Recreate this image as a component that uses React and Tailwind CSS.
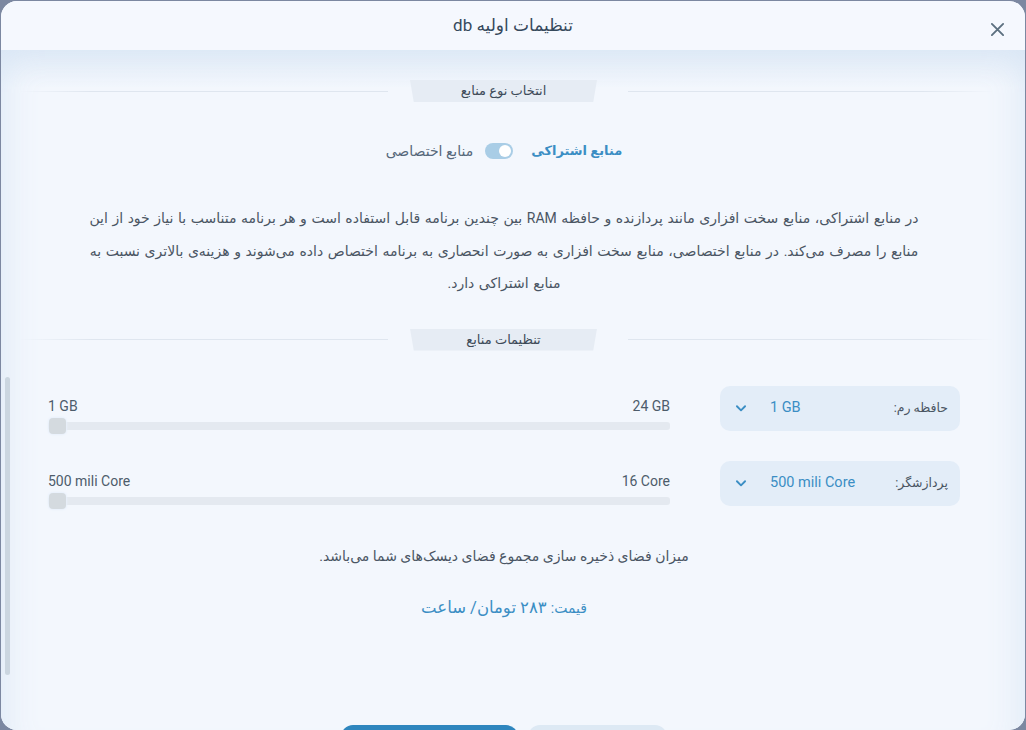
import React from "react";

function SectionTitle({ children }) {
  return (
    <div dir="ltr" className="flex items-center h-[22px]">
      <div className="ml-[17px] w-[370px] h-px bg-gradient-to-r from-transparent via-[#dfe6ef] via-20% to-[#dfe6ef]" />
      <div className="ml-[22px] w-[187px] h-[22px] bg-[#e6ecf4] [clip-path:polygon(0_0,100%_0,98%_100%,2%_100%)] flex items-center justify-center text-[13px] text-[#3d4a58]" dir="rtl">
        {children}
      </div>
      <div className="ml-[31px] w-[367px] h-px bg-gradient-to-l from-transparent via-[#dfe6ef] via-20% to-[#dfe6ef]" />
    </div>
  );
}

function Chevron() {
  return (
    <svg width="14" height="14" viewBox="0 0 24 24" fill="none" stroke="#3b8ec4" strokeWidth="3.2" strokeLinecap="round" strokeLinejoin="round">
      <path d="M5 9l7 7 7-7" />
    </svg>
  );
}

function SelectBox({ label, value }) {
  return (
    <div dir="ltr" className="shrink-0 w-[240px] h-[45px] rounded-[10px] bg-[#e3edf8] flex items-center">
      <div className="ml-[14px] flex items-center"><Chevron /></div>
      <div className="ml-[22px] text-[14.5px] text-[#3b8ec4]">{value}</div>
      <div className="flex-1" />
      <div className="mr-[12px] text-[12.5px] text-[#4a5563]" dir="rtl">{label}</div>
    </div>
  );
}

function Slider({ min, max }) {
  return (
    <div dir="ltr" className="w-[622px] pt-[12px]">
      <div className="flex justify-between text-[14px] text-[#4d5c6b] leading-[16px]">
        <span>{min}</span>
        <span>{max}</span>
      </div>
      <div className="relative mt-[4px] h-[16px] flex items-center">
        <div className="w-full h-[8px] rounded-[3px] bg-[#e4e9f0]" />
        <div className="absolute left-[1px] top-0 w-[17px] h-[16px] rounded-[4px] bg-[#d4dadf] shadow-[0_0_2px_1px_#e8f0fb]" />
      </div>
    </div>
  );
}

export default function App() {
  return (
    <div className="w-[1026px] h-[730px] bg-[#7c88a1] pt-px px-px overflow-hidden" style={{ fontFamily: "Roboto, 'DejaVu Sans', 'Noto Sans', sans-serif" }}>
      <div dir="rtl" className="relative h-[729px] rounded-[16px] bg-[#f3f7fd] overflow-hidden flex flex-col">
        {/* Header */}
        <div className="relative h-[49px] shrink-0 bg-[#f5f8fe] flex items-center justify-center">
          <div className="text-[17px] text-[#35495c] mt-[1px]">تنظیمات اولیه db</div>
          <button className="absolute right-[20px] top-[20px] w-[16px] h-[16px] flex items-center justify-center">
            <svg width="15" height="15" viewBox="0 0 16 16" fill="none" stroke="#5c7080" strokeWidth="2" strokeLinecap="round">
              <path d="M2 2l12 12M14 2L2 14" />
            </svg>
          </button>
        </div>

        {/* Body */}
        <div className="relative flex-1 bg-[linear-gradient(to_bottom,#e4edf8,#f3f7fd_38px)] shadow-[inset_0_0_36px_rgba(214,228,244,0.9)]">
          <div className="absolute left-[4px] top-[327px] w-[5px] h-[298px] rounded-full bg-[#cbd6e0]" />

          <div className="pt-[30px]">
            <SectionTitle>انتخاب نوع منابع</SectionTitle>
          </div>

          <div className="w-[1006px] mr-auto">
            {/* toggle row */}
            <div className="mt-[39px] h-[20px] flex items-center justify-center">
              <span className="font-bold text-[13px] text-[#3b8ec4]">منابع اشتراکی</span>
              <div dir="ltr" className="mr-[18px] ml-[12px] w-[28px] h-[16px] rounded-full bg-[#a9cde6] flex items-center justify-end pr-[2px]">
                <div className="w-[12px] h-[12px] rounded-full bg-white" />
              </div>
              <span className="text-[14px] text-[#56677a]">منابع اختصاصی</span>
            </div>

            {/* paragraph */}
            <div className="mt-[41px] text-center text-[14px] leading-[32.5px] text-[#4a5563] [word-spacing:1.1px]">
              <div className="whitespace-nowrap">در منابع اشتراکی، منابع سخت افزاری مانند پردازنده و حافظه RAM بین چندین برنامه قابل استفاده است و هر برنامه متناسب با نیاز خود از این</div>
              <div className="whitespace-nowrap">منابع را مصرف می‌کند. در منابع اختصاصی، منابع سخت افزاری به صورت انحصاری به برنامه اختصاص داده می‌شوند و هزینه‌ی بالاتری نسبت به</div>
              <div className="whitespace-nowrap">منابع اشتراکی دارد.</div>
            </div>
          </div>

          <div className="mt-[29px]">
            <SectionTitle>تنظیمات منابع</SectionTitle>
          </div>

          <div className="w-[1006px] mr-auto">
            {/* resources */}
            <div className="mt-[35px] px-[47px] flex flex-col gap-[30px]">
              <div className="h-[45px] flex items-start gap-[50px]">
                <SelectBox label="حافظه رم:" value="1 GB" />
                <Slider min="1 GB" max="24 GB" />
              </div>
              <div className="h-[45px] flex items-start gap-[50px]">
                <SelectBox label="پردازشگر:" value="500 mili Core" />
                <Slider min="500 mili Core" max="16 Core" />
              </div>
            </div>

            <div className="mt-[38px] text-center text-[14px] leading-[24px] text-[#4a5563]">
              میزان فضای ذخیره سازی مجموع فضای دیسک‌های شما می‌باشد.
            </div>

            <div className="mt-[28px] text-center text-[16.5px] leading-[24px] text-[#3b8ec4]">
              <span className="text-[14px]">قیمت:</span> ۲۸۳ تومان/ ساعت
            </div>

            <div className="mt-[105px] flex justify-center gap-[10px]">
              <button className="w-[139px] h-[40px] rounded-[12px] bg-[#dde9f4]" />
              <button className="w-[177px] h-[40px] rounded-[12px] bg-[#2e86be]" />
            </div>
          </div>
        </div>
      </div>
    </div>
  );
}
